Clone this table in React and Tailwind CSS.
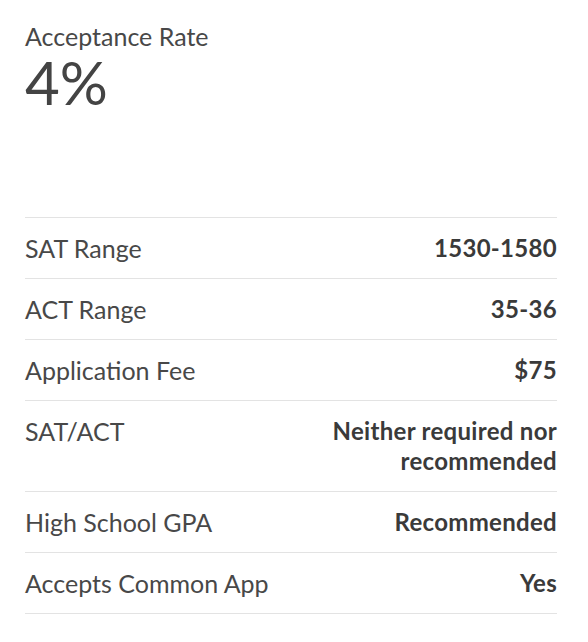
import React from "react";

const rows = [
  { label: "SAT Range", value: "1530-1580" },
  { label: "ACT Range", value: "35-36" },
  { label: "Application Fee", value: "$75" },
  { label: "SAT/ACT", value: "Neither required nor recommended" },
  { label: "High School GPA", value: "Recommended" },
  { label: "Accepts Common App", value: "Yes" },
];

const App = () => {
  return (
    <div className="min-h-[642px] bg-white px-[25px] pt-[20px] font-['Lato',sans-serif] text-[#484848]">
      <div className="text-[25px] leading-[32px]">Acceptance Rate</div>
      <div className="text-[60px] leading-[60px] text-[#444]">4%</div>

      <div className="mt-[105px] w-[532px] border-t border-[#e3e3e3]">
        {rows.map((row, i) => (
          <div
            key={i}
            className="flex justify-between gap-6 border-b border-[#e3e3e3] py-[15px] text-[25px] leading-[30px]"
          >
            <span className="shrink-0">{row.label}</span>
            <span className="max-w-[260px] text-right text-[24px] font-bold tracking-[0.3px] text-[#3a3a3a]">
              {row.value}
            </span>
          </div>
        ))}
      </div>
    </div>
  );
};

export default App;
